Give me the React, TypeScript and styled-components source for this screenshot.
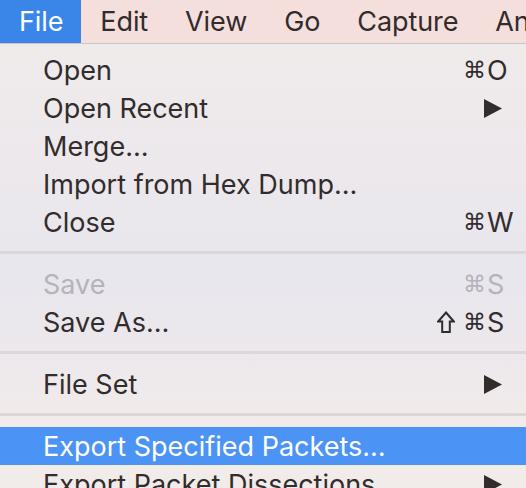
import { createGlobalStyle, styled } from "styled-components";

const GlobalStyle = createGlobalStyle`
  html, body {
    margin: 0;
    padding: 0;
    overflow: hidden;
  }
  body {
    font-family: Inter, "Noto Sans", "DejaVu Sans", sans-serif;
  }
`;

const Screen = styled.div`
  width: 526px;
  height: 488px;
  overflow: hidden;
  background: linear-gradient(
    180deg,
    #f1ebea 0%,
    #ece8ec 35%,
    #e8e6ee 55%,
    #ece8ec 72%,
    #f2ebea 88%,
    #f1ebea 100%
  );
`;

const MenuBar = styled.div`
  display: flex;
  height: 43px;
  background: #f4dfdd;
  border-bottom: 1px solid #ccc5c5;
  white-space: nowrap;
`;

const MenuTitle = styled.div<{ $active?: boolean }>`
  padding: 0 18px 0 19px;
  line-height: 43px;
  font-size: 27px;
  letter-spacing: -0.1px;
  color: ${(p) => (p.$active ? "#ffffff" : "#322b2b")};
  background: ${(p) => (p.$active ? "#3a85e8" : "transparent")};
`;

const Menu = styled.div`
  display: flex;
  flex-direction: column;
  padding-top: 7px;
`;

const Item = styled.div<{ $highlighted?: boolean; $disabled?: boolean }>`
  display: grid;
  grid-template-columns: 1fr auto 39px;
  align-items: center;
  height: 38px;
  padding-left: 43px;
  font-size: 27px;
  white-space: nowrap;
  color: ${(p) =>
    p.$highlighted ? "#ffffff" : p.$disabled ? "#b6b3b9" : "#322c2c"};
  background: ${(p) => (p.$highlighted ? "#4b93f5" : "transparent")};
`;

const Label = styled.span``;

const Mods = styled.span`
  display: inline-flex;
  align-items: center;
  justify-content: flex-end;
  padding-right: 1px;
  font-family: "DejaVu Sans", sans-serif;
  font-size: 23px;
`;

const ShiftIcon = styled.svg`
  margin-right: 8px;
`;

const Key = styled.span``;

const SubArrow = styled.svg`
  grid-column: 2 / 4;
  justify-self: end;
  margin-right: 24px;
`;

const Separator = styled.div`
  height: 3px;
  margin: 10px 0 11px;
  background: #dbd7da;
`;

type Entry =
  | { sep: true }
  | {
      sep?: false;
      label: string;
      shift?: boolean;
      cmd?: boolean;
      keyName?: string;
      sub?: boolean;
      disabled?: boolean;
      highlighted?: boolean;
    };

const entries: Entry[] = [
  { label: "Open", cmd: true, keyName: "O" },
  { label: "Open Recent", sub: true },
  { label: "Merge…" },
  { label: "Import from Hex Dump…" },
  { label: "Close", cmd: true, keyName: "W" },
  { sep: true },
  { label: "Save", cmd: true, keyName: "S", disabled: true },
  { label: "Save As…", shift: true, cmd: true, keyName: "S" },
  { sep: true },
  { label: "File Set", sub: true },
  { sep: true },
  { label: "Export Specified Packets…", highlighted: true },
  { label: "Export Packet Dissections", sub: true },
];

const titles = ["File", "Edit", "View", "Go", "Capture", "Analyze"];

export default function App() {
  return (
    <Screen>
      <GlobalStyle />
      <MenuBar>
        {titles.map((t, i) => (
          <MenuTitle key={t} $active={i === 0}>
            {t}
          </MenuTitle>
        ))}
      </MenuBar>
      <Menu>
        {entries.map((e, i) =>
          e.sep ? (
            <Separator key={i} />
          ) : (
            <Item key={i} $highlighted={e.highlighted} $disabled={e.disabled}>
              <Label>{e.label}</Label>
              {e.sub ? (
                <SubArrow width="18" height="19" viewBox="0 0 18 19">
                  <path d="M0 0 L18 9.5 L0 19 Z" fill="currentColor" />
                </SubArrow>
              ) : (
                <>
                  <Mods>
                    {e.shift && (
                      <ShiftIcon width="18" height="22" viewBox="0 0 18 22">
                        <path
                          d="M9 1.5 L16.8 10.5 L12.8 10.5 L12.8 21 L5.2 21 L5.2 10.5 L1.2 10.5 Z"
                          fill="none"
                          stroke="currentColor"
                          strokeWidth="2"
                          strokeLinejoin="miter"
                        />
                      </ShiftIcon>
                    )}
                    {e.cmd && "⌘"}
                  </Mods>
                  <Key>{e.keyName}</Key>
                </>
              )}
            </Item>
          )
        )}
      </Menu>
    </Screen>
  );
}
